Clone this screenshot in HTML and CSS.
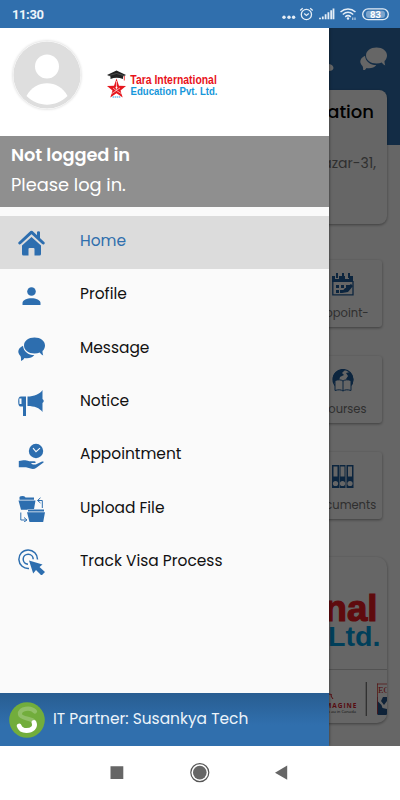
FILE: index.html
```html
<!DOCTYPE html>
<html lang="en">
<head>
<meta charset="utf-8">
<title>Tara International Education</title>
<link rel="stylesheet" href="styles.css">
</head>
<body>
<div class="phone">
  <header class="status">
    <span class="time">11:30</span>
    <svg class="status-icons" width="110" height="14" viewBox="0 0 110 14" fill="none" stroke="#e4edf6">
      <g fill="#e4edf6" stroke="none"><circle cx="4" cy="10.3" r="1.7"/><circle cx="9" cy="10.3" r="1.7"/><circle cx="13.6" cy="10.3" r="1.7"/></g>
      <circle cx="26.4" cy="7.5" r="5.1" stroke-width="1.3"/><path d="M24.2 6.5l2.2 2 2.4-2M20.2 3.5l2.5-2.3M30.2 1.2l2.5 2.3" stroke-width="1.3"/>
      <path d="M40 12.3v-1.6M42.8 12.3V9.4M45.6 12.3V7.3M48.4 12.3V5.2M51.2 12.3V3.2M53.5 12.3V1.4" stroke-width="1.8"/>
      <path d="M60.5 5c4.5-4 10.500-4 15 0M62.800 7.500c3.200-2.800 7.200-2.800 10.400 0M65.200 9.800c1.800-1.500 3.800-1.500 5.600 0" stroke-width="1.500"/><circle cx="68" cy="11.500" r="1.200" fill="#e4edf6" stroke="none"/><path d="M72.800 10.500v2.500M75 10.500v2.500" stroke-width=".9"/>
      <rect x="82.700" y="1.900" width="25.600" height="10.800" rx="5.400" stroke-width="1.300"/><rect x="86" y="3.700" width="19" height="7.200" rx="3" fill="#7da5cd" stroke="none"/>
      <text class="battery" x="95.500" y="10.700" text-anchor="middle">83</text>
    </svg>
  </header>

  <main class="screen">
    <div class="page">
      <div class="hero">
        <svg class="hero-bell" width="5" height="8" viewBox="0 0 5 8"><path fill="currentColor" d="M0 0q4 .5 4.500 4Q4 7 0 7z"/></svg>
        <svg class="hero-chat" width="27" height="24" viewBox="0 0 27 24"><use href="#chat"/></svg>
      </div>
      <section class="info">
        <h1>Education</h1>
        <p>Bazar-31,</p>
      </section>
      <section class="tiles">
        <div class="tile">
          <svg width="22" height="23" viewBox="0 0 22 23"><path fill="#1e5c9c" d="M0 3h3v3h4V3h6v3h4V3h4v6H0z"/><path fill="#1e5c9c" d="M4 0h2v5H4zM10 0h2v5h-2zM16 0h2v5h-2z"/><path d="M.8 8v13.800H21V8" fill="none" stroke="#1e5c9c" stroke-width="1.300"/><path fill="#1e5c9c" d="M4 12h3v3H4zM9 12h3v3H9zM14 12h4v3h-4zM4 17h3v3H4zM8 17h4v3H8zM10 20l2-4 7-5 2 2-5 6z"/></svg>
          <span>Appoint-</span>
        </div>
        <div class="tile">
          <svg width="22" height="23" viewBox="0 0 22 23"><circle cx="11" cy="10.500" r="10" fill="none" stroke="#1e5c9c" stroke-width="1.200"/><path fill="#1e5c9c" d="M3 4C6 0 11 0 13 1l-3 3 2 2-4 2-1 4-5 2C0 10 1 6 3 4zM14 4l4-1c4 4 4 9 2 13l-3-2-3-4 2-3z"/><path d="M3 11.500c3-1 6-1 8 .5 2-1.500 5-1.500 8-.5v10c-3-1-6-1-8 .5-2-1.500-5-1.500-8-.5zM11 12v10" fill="#fff" stroke="#1e5c9c"/></svg>
          <span>Courses</span>
        </div>
        <div class="tile">
          <svg width="22" height="23" viewBox="0 0 22 23"><path fill="#1e5c9c" d="M0 0h7v23H0zM7.500 0h6v23h-6zM14.500 0h7v23h-7z"/><path fill="#fff" d="M1.500 1.500h4v10h-4zM8.500 1.500h4v10h-4zM16 1.500h4v10h-4z"/><circle cx="3.500" cy="18.500" r="2.600" fill="#fff"/><circle cx="10.500" cy="18.500" r="2.600" fill="#fff"/><circle cx="18" cy="18.500" r="2.600" fill="#fff"/></svg>
          <span>Documents</span>
        </div>
      </section>
      <section class="partners">
        <svg width="127" height="166" viewBox="260 557 127 166">
          <g class="narrow">
            <text x="324.500" y="620.500" font-size="37" textLength="53" lengthAdjust="spacingAndGlyphs" fill="#ed1c24" stroke="#ed1c24" stroke-width="1.200">nal</text>
            <text x="328" y="645.500" font-size="27" textLength="52.500" lengthAdjust="spacingAndGlyphs" fill="#009ee2">Ltd.</text>
          </g>
          <path d="M260 669.500h127" stroke="#ccc"/>
          <text class="imagine" x="322" y="707.500" textLength="34.500">IMAGINE</text>
          <path d="M329 694q4 0 2 2l2 3" stroke="#d91c2b" fill="none"/>
          <text class="canada" x="325" y="713" textLength="31">en au in Canada</text>
          <path d="M366.300 682v34" stroke="#777" stroke-width="1.300"/>
          <path fill="#24558c" d="M377.500 697h10v17h-10z"/><path fill="#fff" d="M378 697h5l-2 4 3 4 3-4v10h-6l-3-3z"/><path fill="#24558c" d="M377.500 701l4 4 1 3 5 1v6h-10z"/>
          <text class="ec" x="378" y="692.500">EC</text><path d="M377.500 683.500V714M377 684h10" stroke="#c22" fill="none" stroke-width=".7"/>
        </svg>
      </section>
    </div>
    <div class="scrim"></div>

    <aside class="drawer">
      <div class="brand">
        <svg class="avatar" width="68" height="68" viewBox="0 0 68 68"><circle cx="34" cy="34" r="33.600" fill="#dedede"/><circle cx="34" cy="25.500" r="12" fill="#fff"/><path d="M13.500 55C22 38 46 38 54.500 55 43 66.500 25 66.500 13.500 55z" fill="#fff"/></svg>
        <svg class="logo" width="112" height="30" viewBox="106 69 112 30">
          <path fill="#222" d="M107 75l9.500-4.500L126 75l-3 1.500V79q-6.500-2.500-12.500 0v-2.500z"/><path d="M108.500 75.700l8-2.200 8 2.200" stroke="#777" stroke-width=".5" fill="none"/><path d="M124.300 76v4.500" stroke="#e11" stroke-width=".8"/>
          <path fill="#e6171e" d="M116.500 78.500l2.500 7.300 7 .1-5.500 4.500 2.200 7-6.200-4.200-6.200 4.200 2.200-7-5.500-4.500 7-.1z"/><path d="M116.500 81v8.500M113 88l3 2.500 4-2.500M111 94l5.500-3.500 5.500 3.500" stroke="#fff" stroke-width=".6" fill="none"/><circle cx="116.500" cy="87.500" r="1" fill="#fff"/><path d="M112.500 97h8" stroke="#2a9ddb" stroke-width="1.200" stroke-dasharray="1.500 .6"/>
          <g class="narrow"><text x="130.300" y="84" font-size="12" textLength="86.500" lengthAdjust="spacingAndGlyphs" fill="#e8131b">Tara International</text><text x="130.500" y="95.300" font-size="11" textLength="87" fill="#1797da" lengthAdjust="spacingAndGlyphs">Education Pvt. Ltd.</text></g>
        </svg>
      </div>
      <div class="account"><strong>Not logged in</strong><span>Please log in.</span></div>
      <nav class="menu">
        <a class="item active"><svg viewBox="0 0 27 26"><path d="M1.800 13L13.500 2.200 25.200 13" fill="none" stroke="currentColor" stroke-width="3" stroke-linecap="round" stroke-linejoin="round"/><path fill="currentColor" d="M19 2.200q0-1 1.500-1t1.500 1V9l-3-2.700zM13.500 7L23 15.500V24q0 1.500-1.500 1.500h-5V19q0-1-1-1h-4q-1 0-1 1v6.500h-5Q4 25.500 4 24v-8.500z"/></svg><span>Home</span></a>
        <a class="item"><svg viewBox="0 0 27 26"><circle cx="13.500" cy="8.500" r="4.300" fill="currentColor"/><path fill="currentColor" d="M4.500 22v-2c0-3 4.500-4.800 9-4.800s9 1.800 9 4.800v2z"/></svg><span>Profile</span></a>
        <a class="item"><svg viewBox="0 0 27 26"><g id="chat"><path fill="currentColor" d="M16.500 1.500C10.500 1.500 6 5 6 9.500s4.500 8 10.500 8q3 0 5.200-.9 1.300 2.200 3.500 3-.8-2.300-.7-4.500c1.600-1.400 2.500-3.400 2.500-5.600 0-4.500-4.500-8-10.500-8z"/><path fill="currentColor" d="M5 9.700C2 11 .3 13.200.3 15.600c0 1.600.8 3.200 2.200 4.400q1 2.200.5 5 2.500-1 3.500-3c4 .7 7.800-.3 9.800-3-6 0-10.800-3.500-11.300-9.300z"/></g></svg><span>Message</span></a>
        <a class="item"><svg viewBox="0 0 27 26"><path fill="currentColor" d="M9.500 6.500C16 6.500 22 4 24.500 0v9q2.500 2 0 4v9c-3-4-8-6-15-6zM3 6.500h5V26H5v-9.500H2.500C1 16.500.2 15 .2 11.500S1 6.500 3 6.500z"/><path d="M1.300 8.500h2.200v5.500H1.500z" fill="#fafafa"/></svg><span>Notice</span></a>
        <a class="item"><svg viewBox="0 0 27 26"><circle cx="18" cy="8" r="7.200" fill="currentColor"/><path d="M15 5.200l3 3.500 4-3.500" fill="none" stroke="#fafafa" stroke-width="1.100"/><path fill="currentColor" d="M.8 18c5-1 6-1.300 10.500.2h5q2 .3 1 1.800h-4.500l2 1.500h3l6.200-3q2.300-.5 1.500 1L18 25q-1.500 1.200-4.500.8L8 24.200H.8z"/></svg><span>Appointment</span></a>
        <a class="item"><svg viewBox="0 0 27 26"><path fill="currentColor" d="M1.500 1Q2 0 5 0q2 0 2.500 1.500H16v2.300H1.500zM.5 4.500h17L16 13H10l-.5.800H3zM10 13.500h16v2H10zM9 16.200h18L25.200 26H11.500z"/><path d="M24.300 12V4.500h-4.500M22.500 1.800L19.500 4.500l3 2.500M2.800 16.500V24h5M6 21.500l3 2.500-3 2" fill="none" stroke="currentColor"/></svg><span>Upload File</span></a>
        <a class="item"><svg viewBox="0 0 27 26"><path d="M11 19.500a9.300 9.300 0 1 1 8.500-9M10 15.200a5 5 0 1 1 5.200-5" fill="none" stroke="currentColor" stroke-width="1.500"/><path fill="currentColor" d="M11 11.500l13.500 4-3 2.500 5.500 5-3.500 3.500-5.500-5.500-2.800 3.500z"/></svg><span>Track Visa Process</span></a>
      </nav>
      <footer class="credit">
        <svg width="36" height="36" viewBox="0 0 36 36"><circle cx="18" cy="18" r="17.800" fill="#72ad3c"/><path d="M26 9.500C22 5 10 6 11 12.500c.8 5 14.500 3 14.500 9" fill="none" stroke="#91bf68" stroke-width="4.200" stroke-linecap="round"/><path d="M25 20.500c2 4.500-2 8-7.500 8-4 0-6.500-2-7.300-4.500" fill="none" stroke="#fff" stroke-width="4.800" stroke-linecap="round"/></svg>
        <span>IT Partner: Susankya Tech</span>
      </footer>
    </aside>
  </main>

  <footer class="keys">
    <svg width="180" height="22" viewBox="110 763 180 22"><path fill="#666" d="M110.500 767.300h12.800v12.800h-12.800zM275 773.800l12.200-7.200v14.200z"/><circle cx="199.800" cy="773.600" r="9" fill="none" stroke="#555" stroke-width="1.200"/><circle cx="199.800" cy="773.600" r="6.800" fill="#666"/></svg>
  </footer>
</div>
</body>
</html>
```
FILE: styles.css
```css
* { box-sizing: border-box; }
body { margin: 0; font-family: Poppins, Inter, sans-serif; color: #111; }
svg { display: block; flex: none; }
.phone { width: 400px; height: 800px; display: flex; flex-direction: column; overflow: hidden; background: #fff; }

.status { height: 28px; flex: none; background: #306fad; display: flex; align-items: center; justify-content: space-between; padding: 0 10px 0 12px; color: #edf4fa; }
.time { font: 700 13px Roboto, sans-serif; letter-spacing: -.4px; padding-top: 1px; }
.battery { font: 700 9.500px Roboto, sans-serif; fill: #fff; stroke: none; }

.screen { position: relative; height: 718px; flex: none; overflow: hidden; }
.page { height: 718px; background: #fff; display: flex; flex-direction: column; align-items: flex-end; }
.hero { width: 100%; height: 117px; flex: none; background: #306fad; display: flex; justify-content: flex-end; gap: 26px; padding: 18px 13px 0 0; color: #fff; }
.hero-bell { margin-top: 18px; }
.info { width: 374px; height: 134px; flex: none; margin: -55px 13px 36px 0; background: #fff; border-radius: 8px; box-shadow: 0 1px 3px #0006; text-align: right; padding: 9px 13px 0; }
.info h1 { font-size: 18px; line-height: 26px; font-weight: 500; margin: 0; color: #000; }
.info p { font-size: 14px; line-height: 20px; margin: 28px -2px 0 0; color: #777; }
.tiles { display: flex; flex-direction: column; gap: 29px; margin-right: 18px; }
.tile { width: 78px; height: 67px; border-radius: 3px; box-shadow: 0 1px 3px #0006; display: flex; flex-direction: column; align-items: center; padding-top: 13px; gap: 8px; }
.tile span { font-size: 11.500px; line-height: 18px; color: #777; }
.partners { width: 374px; height: 166px; flex: none; margin: 38px 13px 0 0; border-radius: 10px; box-shadow: 0 1px 3px #0006; overflow: hidden; display: flex; justify-content: flex-end; }
.narrow { font-family: "Liberation Sans Narrow", "Liberation Sans", sans-serif; font-weight: 700; }
.imagine { font: 700 6.500px "Open Sans", sans-serif; fill: #d91c2b; }
.canada { font: 4.200px "Open Sans", sans-serif; fill: #333; }
.ec { font: 9px "Liberation Serif", serif; fill: #c22; }
.scrim { position: absolute; inset: 0; background: rgba(0, 0, 0, .6); }

.drawer { position: absolute; left: 0; top: 0; width: 329px; height: 718px; background: #fafafa; display: flex; flex-direction: column; box-shadow: 0 0 3px #0008; }
.brand { height: 108px; flex: none; background: #fff; display: flex; align-items: flex-start; gap: 25px; padding: 13px 0 0 13px; }
.avatar { border-radius: 50%; box-shadow: 0 0 3px #0003; }
.logo { margin-top: 28px; }
.account { height: 71px; flex: none; background: #8f8f8f; color: #fff; display: flex; flex-direction: column; padding: 4px 11px; font-size: 17.800px; line-height: 30px; }
.account strong { font-weight: 600; letter-spacing: -.07px; }
.menu { padding-top: 9px; flex: 1; }
.item { height: 53.300px; display: flex; align-items: center; padding-left: 18px; gap: 35px; font-size: 15.450px; }
.item svg { width: 27px; height: 26px; color: #2d6eaf; }
.item span { padding-bottom: 4px; }
.item.active { background: #dcdcdc; color: #306fad; }
.credit { height: 53px; flex: none; background: linear-gradient(#285d91, #306fad 60%); color: #edf4fa; display: flex; align-items: center; gap: 8px; padding-left: 9px; font-size: 15.450px; }
.credit span { padding-bottom: 3px; }

.keys { flex: 1; display: flex; justify-content: center; align-items: center; }
```
